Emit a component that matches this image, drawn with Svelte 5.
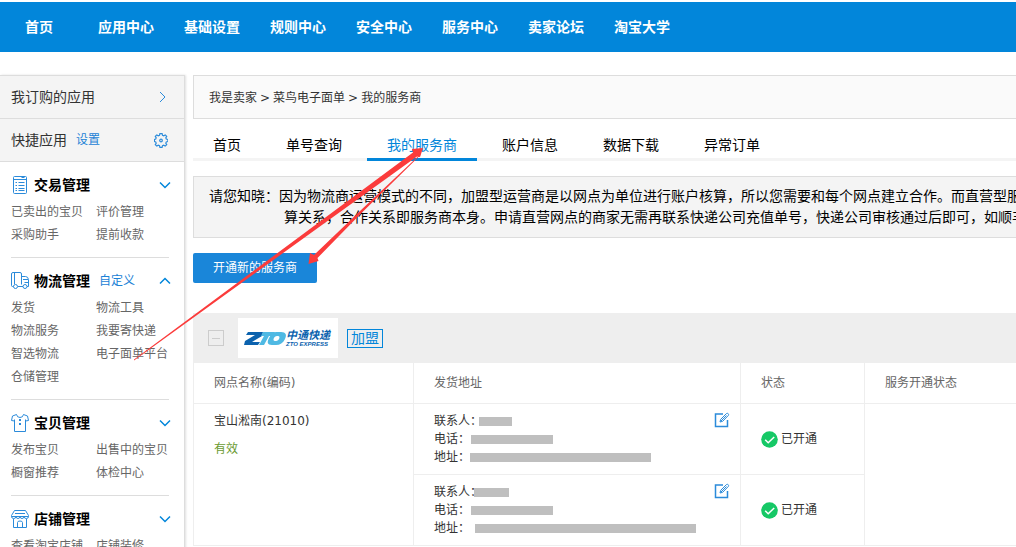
<script lang="ts">
	type Group = {
		title: string;
		icon: 'list' | 'truck' | 'shirt' | 'shop';
		custom?: string;
		open?: boolean;
		links: string[];
	};

	type Contact = { label: string; gap: number; width: number }[];

	const nav = [
		'首页',
		'应用中心',
		'基础设置',
		'规则中心',
		'安全中心',
		'服务中心',
		'卖家论坛',
		'淘宝大学'
	];

	const groups: Group[] = [
		{
			title: '交易管理',
			icon: 'list',
			links: ['已卖出的宝贝', '评价管理', '采购助手', '提前收款']
		},
		{
			title: '物流管理',
			icon: 'truck',
			custom: '自定义',
			open: true,
			links: [
				'发货',
				'物流工具',
				'物流服务',
				'我要寄快递',
				'智选物流',
				'电子面单平台',
				'仓储管理'
			]
		},
		{
			title: '宝贝管理',
			icon: 'shirt',
			links: ['发布宝贝', '出售中的宝贝', '橱窗推荐', '体检中心']
		},
		{
			title: '店铺管理',
			icon: 'shop',
			links: ['查看淘宝店铺', '店铺装修']
		}
	];

	const tabs = ['首页', '单号查询', '我的服务商', '账户信息', '数据下载', '异常订单'];
	let activeTab = $state('我的服务商');

	// contact values are masked, only the bar length is known
	const contacts: Contact[] = [
		[
			{ label: '联系人：', gap: -3, width: 33 },
			{ label: '电话：', gap: 1, width: 82 },
			{ label: '地址：', gap: 0, width: 181 }
		],
		[
			{ label: '联系人：', gap: -8, width: 35 },
			{ label: '电话：', gap: 1, width: 82 },
			{ label: '地址：', gap: 5, width: 221 }
		]
	];
</script>

{#snippet groupIcon(name: string)}
	<svg class="group-icon" viewBox="0 0 18 18" width="18" height="18" aria-hidden="true">
		{#if name === 'list'}
			<rect x="2.5" y=".5" width="13" height="17" rx="1" />
			<path d="M2.5 3.5h13M4.5 6.5h1.500M7.500 6.500h6M4.500 9.500h1.500M7.500 9.500h6M4.500 12.500h1.500M7.500 12.500h6M4.500 14.500h1.500M7.500 14.500h6M10.500 1.500h3" />
		{:else if name === 'truck'}
			<path d="M2.500 14.500H1.500q-1 0-1-1V2q0-1.500 1.500-1.500H9q1.500 0 1.500 1.500v10.500M3.500 1v11M10.500 4.500h4q2.500 0 3 3v7h-1.500M12 7.500h5M13.500 10.500h4M7 14.500h5" />
			<circle cx="4.500" cy="14.500" r="2" />
			<circle cx="14" cy="14.500" r="2" />
		{:else if name === 'shirt'}
			<path d="M5.500.500 1.500 2 .500 6.500l3 .5v10.500h11V7l3-.5-1-4.500-4-1.500Q12 3.500 9 3.500T5.500.500ZM3.500 7V5.500M14.500 7V5.500" />
			<path class="bold" d="M9 5v2M9 9v2" />
		{:else}
			<path d="M3.500.500h11l3 5v1H.500v-1ZM.500 6.500q0 2 2.250 2T5 6.500q0 2 2 2t2-2q0 2 2 2t2-2q0 2 2.250 2t2.250-2M2.500 9v8.500h13V9M6.500 17.500v-5q0-1.500 2.500-1.500t2.500 1.500v5M4 3.500h10" />
		{/if}
	</svg>
{/snippet}

<div class="page">
	<nav class="top-nav">
		{#each nav as item}
			<a href="#top">{item}</a>
		{/each}
	</nav>

	<div class="layout">
		<aside class="sidebar">
			<a class="side-bar" href="#apps">
				<span>我订购的应用</span>
				<svg class="line-icon" viewBox="0 0 14 14" width="14" height="14" aria-hidden="true">
					<path d="m6 2 5 5-5 5" />
				</svg>
			</a>
			<div class="side-bar">
				<span>快捷应用</span>
				<a class="small-link" href="#settings">设置</a>
				<svg class="line-icon gear" viewBox="0 0 14 15" width="14" height="15" aria-hidden="true">
					<path d="M5.900.600h2.200l.4 1.700 1.200.5 1.500-.9 1.500 1.500-.9 1.500.5 1.200 1.600.4v2l-1.600.4-.5 1.200.9 1.500-1.500 1.500-1.500-.9-1.200.5-.4 1.600H5.900l-.4-1.600-1.200-.5-1.500.9-1.500-1.500.9-1.500-.5-1.200L.400 8.500v-2l1.300-.4.5-1.200-.9-1.500 1.500-1.500 1.500.9 1.200-.5Z" />
					<circle cx="7" cy="7.500" r="1.300" />
				</svg>
			</div>

			{#each groups as group}
				<section class="group">
					<div class="group-head">
						{@render groupIcon(group.icon)}
						<h2>{group.title}</h2>
						{#if group.custom}
							<a class="small-link" href="#custom">{group.custom}</a>
						{/if}
						<button class="toggle" aria-label={group.title}>
							<svg viewBox="0 0 12 8" width="12" height="8" aria-hidden="true">
								<path d={group.open ? 'M1 6.500 6 1.500l5 5' : 'm1 1.500 5 5 5-5'} />
							</svg>
						</button>
					</div>
					<div class="links">
						{#each group.links as link}
							<a href="#link">{link}</a>
						{/each}
					</div>
				</section>
			{/each}
		</aside>

		<main class="main">
			<div class="breadcrumb">
				<a href="#seller">我是卖家</a>
				<span>&gt;</span>
				<a href="#waybill">菜鸟电子面单</a>
				<span>&gt;</span>
				<span>我的服务商</span>
			</div>

			<div class="tabs">
				{#each tabs as tab}
					<button class:active={tab === activeTab} onclick={() => (activeTab = tab)}>{tab}</button>
				{/each}
			</div>

			<div class="notice">
				<p>请您知晓：因为物流商运营模式的不同，加盟型运营商是以网点为单位进行账户核算，所以您需要和每个网点建立合作。而直营型服</p>
				<p class="indent">算关系，合作关系即服务商本身。申请直营网点的商家无需再联系快递公司充值单号，快递公司审核通过后即可，如顺丰</p>
			</div>

			<button class="open-btn">开通新的服务商</button>

			<div class="provider">
				<button class="collapse" aria-label="收起"></button>
				<div class="logo">
					<svg viewBox="0 0 100 40" width="100" height="40" role="img" aria-label="中通快递">
						<path class="dark" d="M10 14h15l-1 4-10 6h8l-2 3H6l1-4 10-6H8Z" />
						<path class="light" d="M25 14h12l-2 4h-4l-5 9h-5l5-9h-3Z" />
						<path class="light" fill-rule="evenodd" d="M38 14h5c5 0 6 3 4 7s-5 6-9 6h-4c-5 0-5-3-3-7s4-6 7-6Zm1 4c-3 0-5 5-2 5h1c3 0 5-5 2-5Z" />
						<text class="logo-cn" x="48" y="21">中通快递</text>
						<text class="logo-en" x="48" y="28">ZTO EXPRESS</text>
					</svg>
				</div>
				<span class="tag">加盟</span>
			</div>

			<table>
				<colgroup>
					<col class="col-name" />
					<col class="col-address" />
					<col class="col-status" />
					<col />
				</colgroup>
				<thead>
					<tr>
						<th>网点名称(编码)</th>
						<th>发货地址</th>
						<th>状态</th>
						<th>服务开通状态</th>
					</tr>
				</thead>
				<tbody>
					{#each contacts as contact, i}
						<tr>
							{#if i === 0}
								<td rowspan={contacts.length}>
									<div>宝山淞南(21010)</div>
									<div class="valid">有效</div>
								</td>
							{/if}
							<td>
								<div class="address">
									<div>
										{#each contact as row}
											<div class="field">
												<span>{row.label}</span>
												<span class="mask" style="width: {row.width}px; margin-left: {row.gap}px"></span>
											</div>
										{/each}
									</div>
									<button class="edit" aria-label="编辑">
										<svg viewBox="0 0 16 16" width="16" height="16" aria-hidden="true">
											<path class="frame" d="M9 2H1.500v12.500h12V8" />
											<path d="m6 10 .7-2.700L12.500 1.500q1-.5 1.700.2t.2 1.700L8.700 9.300ZM7 9l5.500-5.500" />
										</svg>
									</button>
								</div>
							</td>
							<td class="middle">
								<div class="status">
									<svg viewBox="0 0 17 17" width="17" height="17" aria-hidden="true">
										<circle cx="8.500" cy="8.500" r="8.300" />
										<path d="m4.200 8.800 3 3 6-5.800" />
									</svg>
									<span>已开通</span>
								</div>
							</td>
							{#if i === 0}
								<td rowspan={contacts.length}></td>
							{/if}
						</tr>
					{/each}
				</tbody>
			</table>
		</main>
	</div>

	<svg class="arrows" viewBox="0 0 440 370" width="440" height="370" aria-hidden="true">
		<path d="m134 359.500 279-207-1-3.500 11-1-3 9-3-.5L134 360.500Z" />
		<path d="m420 154.500-60 56.500-46 44-4-2-1.500 11 10-3-1-3 43-44 60-59Z" />
	</svg>
</div>

<style>
	:global(body) {
		background: #fff;
	}

	.page {
		position: relative;
		height: 100vh;
		overflow: hidden;
		padding-top: 2px;
		box-sizing: border-box;
		font-family: 'DejaVu Sans', 'Noto Sans CJK SC', sans-serif;
		font-size: 12px;
		line-height: 18px;
		color: #333;
	}

	a {
		color: inherit;
		text-decoration: none;
	}

	button {
		padding: 0;
		border: 0;
		background: none;
		font: inherit;
		color: inherit;
		cursor: pointer;
	}

	svg {
		display: block;
		flex: none;
	}

	/* top navigation */
	.top-nav {
		display: flex;
		gap: 30px;
		height: 50px;
		padding-left: 25px;
		line-height: 50px;
		background: #0286da;
		color: #fff;
		font-size: 14px;
		font-weight: bold;
		white-space: nowrap;
	}

	.top-nav a:first-child {
		margin-right: 15px;
	}

	.layout {
		display: flex;
		gap: 8px;
		margin-top: 23px;
	}

	/* sidebar */
	.sidebar {
		flex: none;
		width: 185px;
		box-sizing: border-box;
		border-top: 1px solid #ddd;
		border-right: 1px solid #ddd;
		box-shadow: 1px 0 2px rgba(0, 0, 0, 0.12);
	}

	.side-bar {
		display: flex;
		align-items: center;
		height: 42px;
		padding: 0 16px 0 11px;
		border-bottom: 1px solid #ddd;
		background: #f4f4f4;
		font-size: 14px;
	}

	.line-icon {
		margin-left: auto;
		fill: none;
		stroke: #2b8bda;
	}

	.gear {
		stroke-width: 1.2;
	}

	.small-link {
		margin-left: 9px;
		color: #1c82d6;
		font-size: 12px;
		line-height: 20px;
	}

	.group {
		margin: 0 15px 0 11px;
		padding: 11px 0 10px;
		border-bottom: 1px solid #ddd;
	}

	.group-head {
		display: flex;
		align-items: center;
		height: 24px;
		margin-bottom: 4px;
	}

	.group-icon {
		fill: none;
		stroke: #2b8bda;
	}

	.group-icon .bold {
		stroke-width: 2;
	}

	h2 {
		margin: 0 0 0 5px;
		font-size: 14px;
		color: #000;
	}

	.toggle {
		margin: 0 -2px 0 auto;
	}

	.toggle path {
		fill: none;
		stroke: #0286da;
		stroke-width: 1.5;
	}

	.links {
		display: grid;
		grid-template-columns: 85px 1fr;
		line-height: 23px;
		color: #666;
		white-space: nowrap;
	}

	/* main column */
	.main {
		flex: 1;
		min-width: 0;
	}

	.breadcrumb {
		display: flex;
		gap: 3px;
		height: 42px;
		padding-left: 15px;
		border: 1px solid #ddd;
		border-right: 0;
		background: #fafafa;
		line-height: 44px;
	}

	.tabs {
		display: flex;
		gap: 5px;
		box-shadow: inset 0 -3px #f4f4f4;
		color: #000;
		font-size: 14px;
	}

	.tabs button {
		padding: 10px 20px 0;
		line-height: 32px;
	}

	.tabs .active {
		box-shadow: inset 0 -3px #0286da;
		color: #0286da;
	}

	.notice {
		margin-top: 15px;
		padding: 9px 0 9px 15px;
		overflow: hidden;
		border: 1px solid #ddd;
		border-right: 0;
		background: #f4f4f4;
		color: #000;
		font-size: 14px;
		line-height: 21px;
		white-space: nowrap;
	}

	.notice p {
		margin: 0;
	}

	.notice .indent {
		padding-left: 75px;
	}

	.open-btn {
		display: block;
		width: 124px;
		height: 30px;
		margin: 15px 0 30px;
		border-radius: 2px;
		background: #1a86d9;
		color: #fff;
	}

	/* provider header */
	.provider {
		display: flex;
		align-items: center;
		height: 50px;
		padding-left: 15px;
		background: #eee;
	}

	.collapse {
		display: flex;
		align-items: center;
		justify-content: center;
		width: 16px;
		height: 16px;
		border: 1px solid #ccc;
	}

	.collapse::before {
		content: '';
		width: 8px;
		height: 1px;
		background: #ccc;
	}

	.logo {
		margin: 0 9px 0 14px;
		background: #fff;
	}

	.logo .dark {
		fill: #0b62ae;
	}

	.logo .light {
		fill: #4fb9e3;
	}

	.logo text {
		fill: #0b62ae;
		font-style: italic;
		font-weight: bold;
	}

	.logo-cn {
		font-family: 'Noto Sans CJK SC', sans-serif;
		font-size: 11px;
	}

	.logo-en {
		font-family: 'Liberation Sans', sans-serif;
		font-size: 6px;
	}

	.tag {
		padding: 0 3px;
		border: 1px solid #0286da;
		color: #0286da;
		font-size: 14px;
		line-height: 17px;
	}

	/* branch table */
	table {
		width: 100%;
		table-layout: fixed;
		border-collapse: separate;
		border-spacing: 0;
		border-left: 1px solid #eee;
	}

	.col-name {
		width: 220px;
	}

	.col-address {
		width: 327px;
	}

	.col-status {
		width: 124px;
	}

	th,
	td {
		border-right: 1px solid #eee;
		border-bottom: 1px solid #eee;
		text-align: left;
		vertical-align: top;
	}

	th:last-child,
	tr:first-child td:last-child {
		border-right: 0;
	}

	th {
		padding: 11px 20px;
		color: #666;
		font-weight: normal;
	}

	td {
		padding: 8px 10px 8px 20px;
	}

	.valid {
		margin-top: 10px;
		color: #6a9a30;
	}

	.address {
		display: flex;
		justify-content: space-between;
	}

	.field {
		display: flex;
		align-items: center;
	}

	.mask {
		height: 9px;
		background: #bfbfbf;
	}

	.edit {
		align-self: flex-start;
	}

	.edit path {
		fill: none;
		stroke: #2b8bda;
	}

	.edit .frame {
		stroke-width: 1.5;
	}

	.middle {
		vertical-align: middle;
	}

	.status {
		display: flex;
		align-items: center;
		gap: 3px;
	}

	.status circle {
		fill: #16c866;
	}

	.status path {
		fill: none;
		stroke: #fff;
		stroke-width: 1.5;
	}

	/* pointer annotations over the page */
	.arrows {
		position: absolute;
		top: 0;
		left: 0;
		fill: #fb3b3b;
		pointer-events: none;
	}
</style>
